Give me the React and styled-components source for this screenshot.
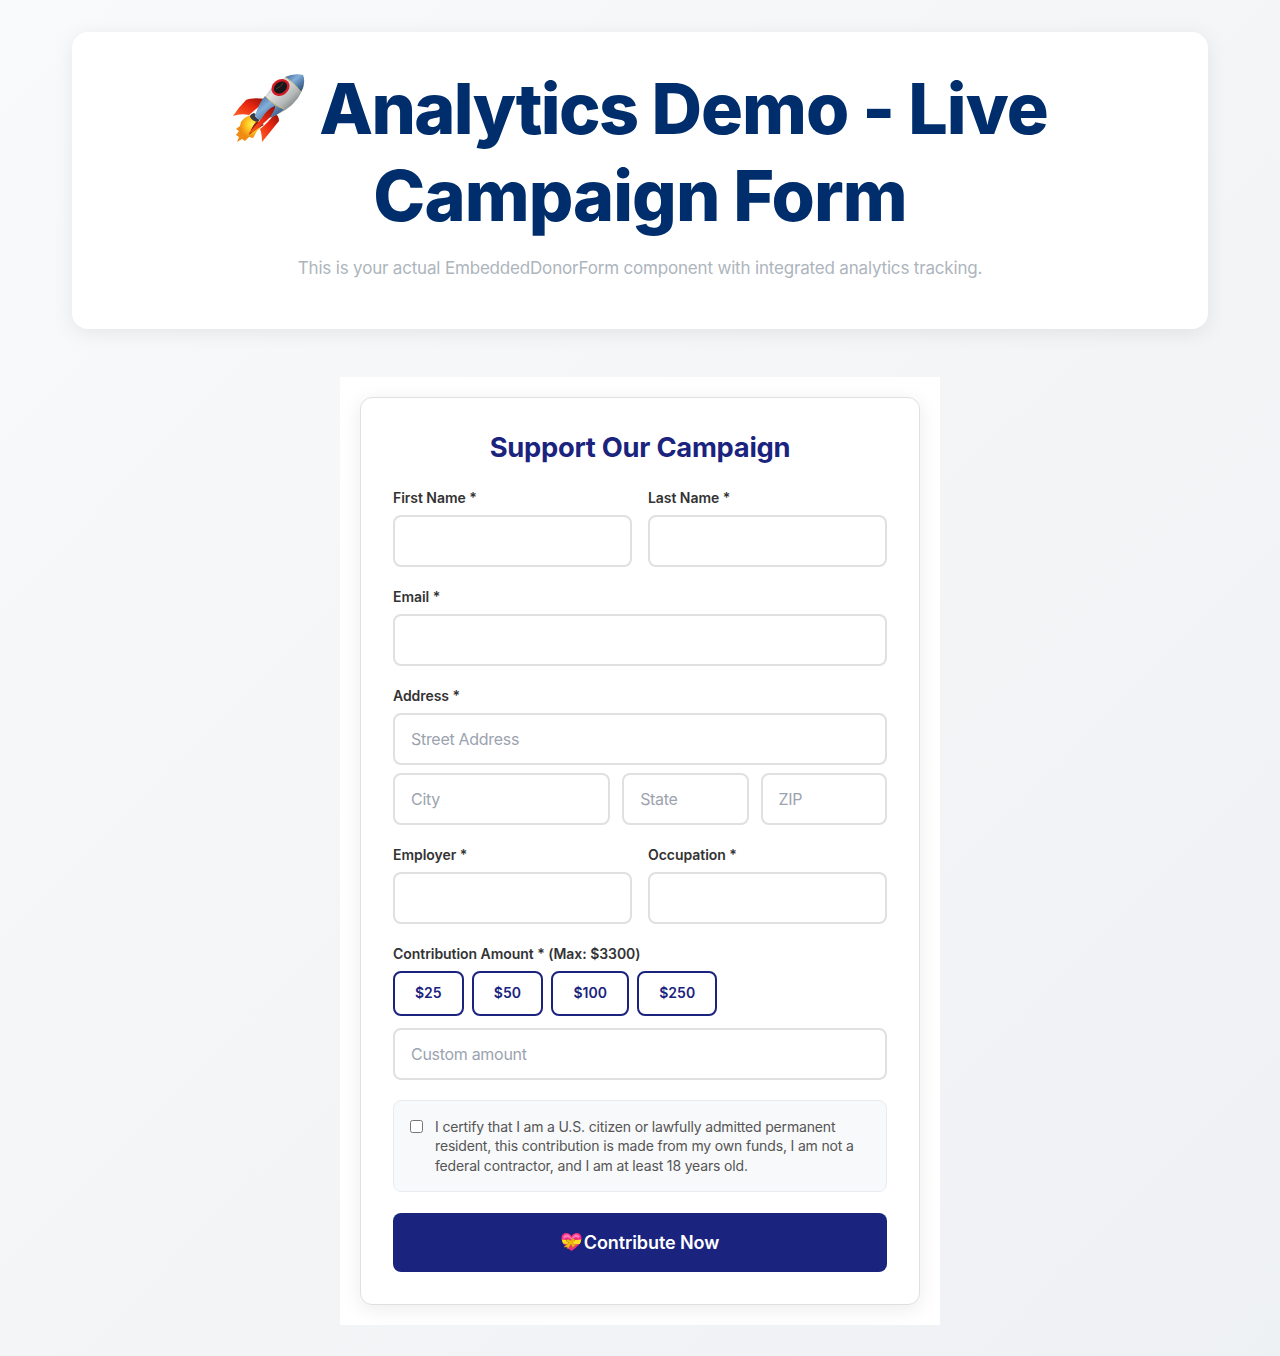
import React from "react";
import styled, { createGlobalStyle } from "styled-components";

const Global = createGlobalStyle`
  *, *::before, *::after { box-sizing: border-box; }
  body { margin: 0; font-family: Inter, "Liberation Sans", sans-serif; -webkit-font-smoothing: antialiased; }
  h1, h2, p { margin: 0; }
`;

const Page = styled.div`
  height: 1356px;
  padding: 32px 72px 31px;
  background: linear-gradient(135deg, #f9fafc 0%, #f3f4f6 60%, #eef1f4 100%);
`;

const Hero = styled.header`
  height: 297px;
  padding: 34px 32px;
  border-radius: 16px;
  background: #fff;
  text-align: center;
  box-shadow: 0 4px 20px rgba(0, 0, 0, 0.08);
`;

const HeroTitle = styled.h1`
  color: #002d6b;
  font-size: 70px;
  font-weight: 800;
  line-height: 86.6px;
  letter-spacing: -0.95px;
  word-spacing: -0.5px;
`;

const TightWord = styled.span`
  letter-spacing: -1.65px;
`;

const RocketIcon = styled.svg`
  width: 74px;
  height: 70px;
  margin-right: 13px;
  vertical-align: -10px;
`;

const HeroText = styled.p`
  margin-top: 14px;
  color: #adb5bd;
  font-size: 17px;
  line-height: 30px;
  letter-spacing: -0.18px;
`;

const FormShell = styled.main`
  width: 600px;
  margin: 48px auto 0;
  padding: 20px;
  background: #fff;
`;

const FormCard = styled.form`
  padding: 32px;
  border: 1px solid #e0e0e0;
  border-radius: 12px;
  background: #fff;
  box-shadow: 0 4px 20px rgba(0, 0, 0, 0.08);
`;

const FormTitle = styled.h2`
  padding-top: 1px;
  margin-bottom: 23px;
  color: #1a237e;
  font-size: 27.3px;
  font-weight: 700;
  line-height: 33.5px;
  letter-spacing: -0.25px;
  text-align: center;
`;

const Columns = styled.div`
  display: grid;
  grid-template-columns: ${({ $cols }) => $cols || "1fr 1fr"};
  gap: ${({ $gap }) => $gap || 16}px;
`;

const Field = styled.div`
  display: flex;
  flex-direction: column;
  min-width: 0;
  margin-bottom: 20px;
`;

const Label = styled.label`
  height: 21px;
  margin-bottom: 6px;
  color: #333;
  font-size: 14px;
  font-weight: 600;
  line-height: 20px;
  letter-spacing: -0.05px;
`;

const Input = styled.input`
  display: block;
  width: 100%;
  height: 52px;
  min-width: 0;
  margin-top: ${({ $top }) => $top || 0}px;
  padding: 12px 16px;
  border: 2px solid #e0e0e0;
  border-radius: 8px;
  background: #fff;
  font: 400 16px/24px Inter, "Liberation Sans", sans-serif;
  letter-spacing: -0.3px;
  &::placeholder { color: #9ca3af; opacity: 1; }
`;

const AddressRow = styled(Columns)`
  margin-top: 8px;
`;

const Amounts = styled.div`
  display: flex;
  gap: 8px;
`;

const Amount = styled.button`
  width: ${({ $width }) => $width}px;
  height: 45px;
  padding: 0 0 2px;
  border: 2px solid #1a237e;
  border-radius: 8px;
  background: #fff;
  color: #1a237e;
  font: 600 14px/21px Inter, "Liberation Sans", sans-serif;
`;

const Certification = styled.label`
  display: flex;
  align-items: flex-start;
  gap: 12px;
  margin-bottom: 20.4px;
  padding: 16px;
  border: 1px solid #e9ecef;
  border-radius: 8px;
  background: #f8f9fa;
  color: #555;
  font-size: 14px;
  line-height: 19.6px;
`;

const Checkbox = styled.input`
  flex: none;
  width: 13px;
  height: 13px;
  margin: 3px 0 0;
`;

const CertLine = styled.span`
  display: block;
  width: max-content;
  white-space: nowrap;
  letter-spacing: -0.16px;
`;

const Submit = styled.button`
  display: flex;
  align-items: center;
  justify-content: center;
  gap: 2px;
  width: 100%;
  height: 59px;
  padding: 0;
  border: 0;
  border-radius: 8px;
  background: #1a237e;
  color: #fff;
  font: 600 18px/27px Inter, "Liberation Sans", sans-serif;
  letter-spacing: -0.1px;
`;

const HeartIcon = styled.svg`
  width: 21px;
  height: 20px;
`;

function Rocket() {
  return (
    <RocketIcon viewBox="0 0 74 70" aria-hidden="true">
      <defs>
        <linearGradient id="hull" x1="0" y1="0" x2="1" y2="1">
          <stop offset="0.2" stopColor="#999c9d" /><stop offset="0.38" stopColor="#e1e3e2" />
          <stop offset="0.6" stopColor="#b4b8b8" /><stop offset="0.85" stopColor="#565b5d" />
        </linearGradient>
        <linearGradient id="blue" x1="0" y1="0" x2="1" y2="1">
          <stop stopColor="#365f8e" /><stop offset="0.4" stopColor="#83afdb" /><stop offset="1" stopColor="#193c68" />
        </linearGradient>
        <linearGradient id="fin" x1="1" y1="0" x2="0" y2="1">
          <stop stopColor="#8e1209" /><stop offset="0.45" stopColor="#e92610" /><stop offset="1" stopColor="#ff6424" />
        </linearGradient>
        <radialGradient id="flame" cx="0.65" cy="0.35">
          <stop stopColor="#fff35c" /><stop offset="0.5" stopColor="#ffc51c" /><stop offset="1" stopColor="#ef8a13" />
        </radialGradient>
      </defs>
      <path fill="url(#fin)" d="M34 25Q20 23 14 26Q7 33 1 42Q9 39 17 41Q26 33 34 27Z" />
      <path fill="url(#fin)" d="M43 39Q47 42 47 47L30 68Q30 60 28 55Q36 49 43 39Z" />
      <path fill="url(#flame)" d="M20 41Q13 42 9 48L8 52L4 55L7 57L4 61L7 63L5 68L10 65L13 67L17 63L21 64L25 57L29 53Q27 45 20 41Z" />
      <path fill="#862011" d="M25 47Q20 52 17 61Q25 54 32 51Z" />
      <path fill="#383b45" d="M22 39Q18 40 18 43Q22 49 27 47L29 43Z" />
      <path fill="url(#hull)" d="M71 1Q49 -1 35 20Q26 33 23 42Q27 48 34 45Q56 38 66 24Q75 10 71 1Z" />
      <path fill="url(#blue)" d="M33 22Q27 29 23 42Q27 48 34 45Q45 42 52 35Q41 31 33 22Z" />
      <path fill="url(#blue)" d="M53 3Q62 -1 71 1Q74 9 69 18Q62 8 53 3Z" />
      <path fill="none" stroke="#cab86c" strokeWidth="1" d="M33 22Q41 31 52 35M53 3Q62 8 69 18" />
      <path fill="url(#fin)" d="M43 32Q36 34 30 44L16 60Q24 57 33 48Q40 42 43 34Z" />
      <ellipse cx="48.5" cy="13.5" rx="8.3" ry="6.7" transform="rotate(-35 48.5 13.5)" fill="#181719" stroke="#d11b25" strokeWidth="2.5" />
      <path fill="none" stroke="#443e3e" strokeWidth="1" d="M44 15Q49 13 51 9" />
    </RocketIcon>
  );
}

function GiftHeart() {
  return (
    <HeartIcon viewBox="0 0 21 20" aria-hidden="true">
      <path fill="#f52c83" d="M10.5 19Q1 12.5.5 6.5C.3 0 7.5-.6 10.5 4C13.5-.6 20.8 0 20.5 6.5Q20 12.5 10.5 19Z" />
      <path fill="#ff77b4" d="M2 5Q4 1 8 3L10.5 6L14 2.5Q17 1.5 19 5L17 6Q14 3 11 8Q6 3 3 7Z" />
      <path fill="#ffdf20" d="M.7 7.5Q10 9 20.3 7.5Q20 10 18.8 12Q10 13 2 11.5Z" />
      <path fill="#f5bd13" stroke="#b67812" strokeWidth=".6" d="M10 9L7 7L5 9L8 10.5L3 15L6 15L7 17L10 12L12 16L13 14L15 14L11 10.5L14 8L12 6Z" />
    </HeartIcon>
  );
}

function TextField({ label }) {
  return <Field><Label>{label}</Label><Input aria-label={label} /></Field>;
}

export default function App() {
  return (
    <>
      <Global />
      <Page>
        <Hero>
          <HeroTitle><Rocket /><TightWord>Analytics</TightWord> Demo - Live<br />Campaign Form</HeroTitle>
          <HeroText>This is your actual EmbeddedDonorForm component with integrated analytics tracking.</HeroText>
        </Hero>
        <FormShell>
          <FormCard>
            <FormTitle>Support Our Campaign</FormTitle>
            <Columns><TextField label="First Name *" /><TextField label="Last Name *" /></Columns>
            <TextField label="Email *" />
            <Field>
              <Label>Address *</Label>
              <Input placeholder="Street Address" />
              <AddressRow $cols="217.1fr 126.4fr 126.4fr" $gap={12}>
                <Input placeholder="City" /><Input placeholder="State" /><Input placeholder="ZIP" />
              </AddressRow>
            </Field>
            <Columns><TextField label="Employer *" /><TextField label="Occupation *" /></Columns>
            <Field>
              <Label>Contribution Amount * (Max: $3300)</Label>
              <Amounts>
                {[[25, 70.6], [50, 71.6], [100, 78], [250, 80]].map(([value, width]) => (
                  <Amount type="button" key={value} $width={width}>${value}</Amount>
                ))}
              </Amounts>
              <Input $top={12} placeholder="Custom amount" />
            </Field>
            <Certification>
              <Checkbox type="checkbox" />
              <span>
                <CertLine>I certify that I am a U.S. citizen or lawfully admitted permanent</CertLine>
                <CertLine>resident, this contribution is made from my own funds, I am not a</CertLine>
                <CertLine>federal contractor, and I am at least 18 years old.</CertLine>
              </span>
            </Certification>
            <Submit type="button"><GiftHeart />Contribute Now</Submit>
          </FormCard>
        </FormShell>
      </Page>
    </>
  );
}
